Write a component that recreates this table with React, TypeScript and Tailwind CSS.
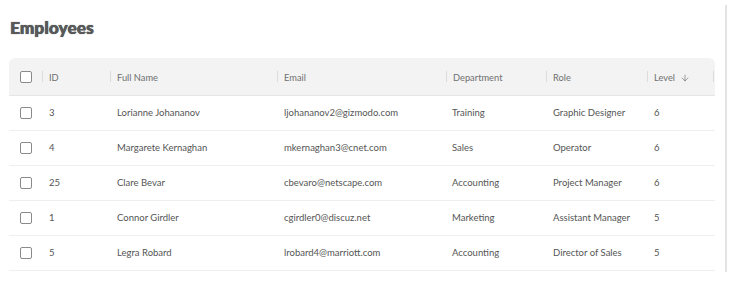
import { ArrowDown } from "lucide-react"

const employees = [
  { id: "3", name: "Lorianne Johananov", email: "ljohananov2@gizmodo.com", dept: "Training", role: "Graphic Designer", level: "6" },
  { id: "4", name: "Margarete Kernaghan", email: "mkernaghan3@cnet.com", dept: "Sales", role: "Operator", level: "6" },
  { id: "25", name: "Clare Bevar", email: "cbevaro@netscape.com", dept: "Accounting", role: "Project Manager", level: "6" },
  { id: "1", name: "Connor Girdler", email: "cgirdler0@discuz.net", dept: "Marketing", role: "Assistant Manager", level: "5" },
  { id: "5", name: "Legra Robard", email: "lrobard4@marriott.com", dept: "Accounting", role: "Director of Sales", level: "5" },
]

const cols = "grid grid-cols-[33px_68px_167px_169px_100px_101px_67px]"

function Checkbox() {
  return <span className="block h-[12px] w-[12px] rounded-[2px] border border-[#8a8a8a] bg-white" />
}

function HeadCell({ label, sort }: { label: string; sort?: boolean }) {
  return (
    <div className="flex items-center">
      <span className="h-[11px] w-px bg-[#dcdcdc]" />
      <span className="ml-[6px] flex items-center gap-[5px] pt-[2px]">
        {label}
        {sort ? <ArrowDown className="h-[10px] w-[10px] text-[#666]" strokeWidth={1.5} /> : null}
      </span>
    </div>
  )
}

export default function App() {
  return (
    <div
      className="h-[292px] w-[731px] bg-white"
      style={{ fontFamily: "Lato, 'Open Sans', sans-serif" }}
    >
      <div className="mt-[5px] h-[267px] w-[727px] border-r-2 border-[#e4e4e4] pl-[9px] pr-[10px]">
        <h1 className="pl-px pt-[12px] text-[17px] font-black leading-[22px] tracking-[0.2px] text-[#595959] [text-shadow:0_0_1px_#595959,0.4px_0_0_#595959]">
          Employees
        </h1>

        <div className="mt-[19px] w-[706px]">
          <div className={`${cols} h-[38px] items-center rounded-t-[6px] border-b border-[#e6e6e6] bg-[#f3f3f3] text-[9.3px] text-[#707070]`}>
            <div className="flex items-center pl-[11px]">
              <Checkbox />
            </div>
            <HeadCell label="ID" />
            <HeadCell label="Full Name" />
            <HeadCell label="Email" />
            <HeadCell label="Department" />
            <HeadCell label="Role" />
            <div className="flex items-center justify-between">
              <HeadCell label="Level" sort />
              <span className="h-[11px] w-px bg-[#dcdcdc]" />
            </div>
          </div>

          {employees.map((e) => (
            <div key={e.id} className={`${cols} h-[35px] items-center border-b border-[#efefef] text-[9.5px] text-[#555]`}>
              <div className="flex items-center pl-[11px]">
                <Checkbox />
              </div>
              <div className="pl-[7px]">{e.id}</div>
              <div className="pl-[7px]">{e.name}</div>
              <div className="pl-[7px]">{e.email}</div>
              <div className="pl-[6px]">{e.dept}</div>
              <div className="pl-[7px]">{e.role}</div>
              <div className="pl-[7px]">{e.level}</div>
            </div>
          ))}
        </div>
      </div>
    </div>
  )
}
